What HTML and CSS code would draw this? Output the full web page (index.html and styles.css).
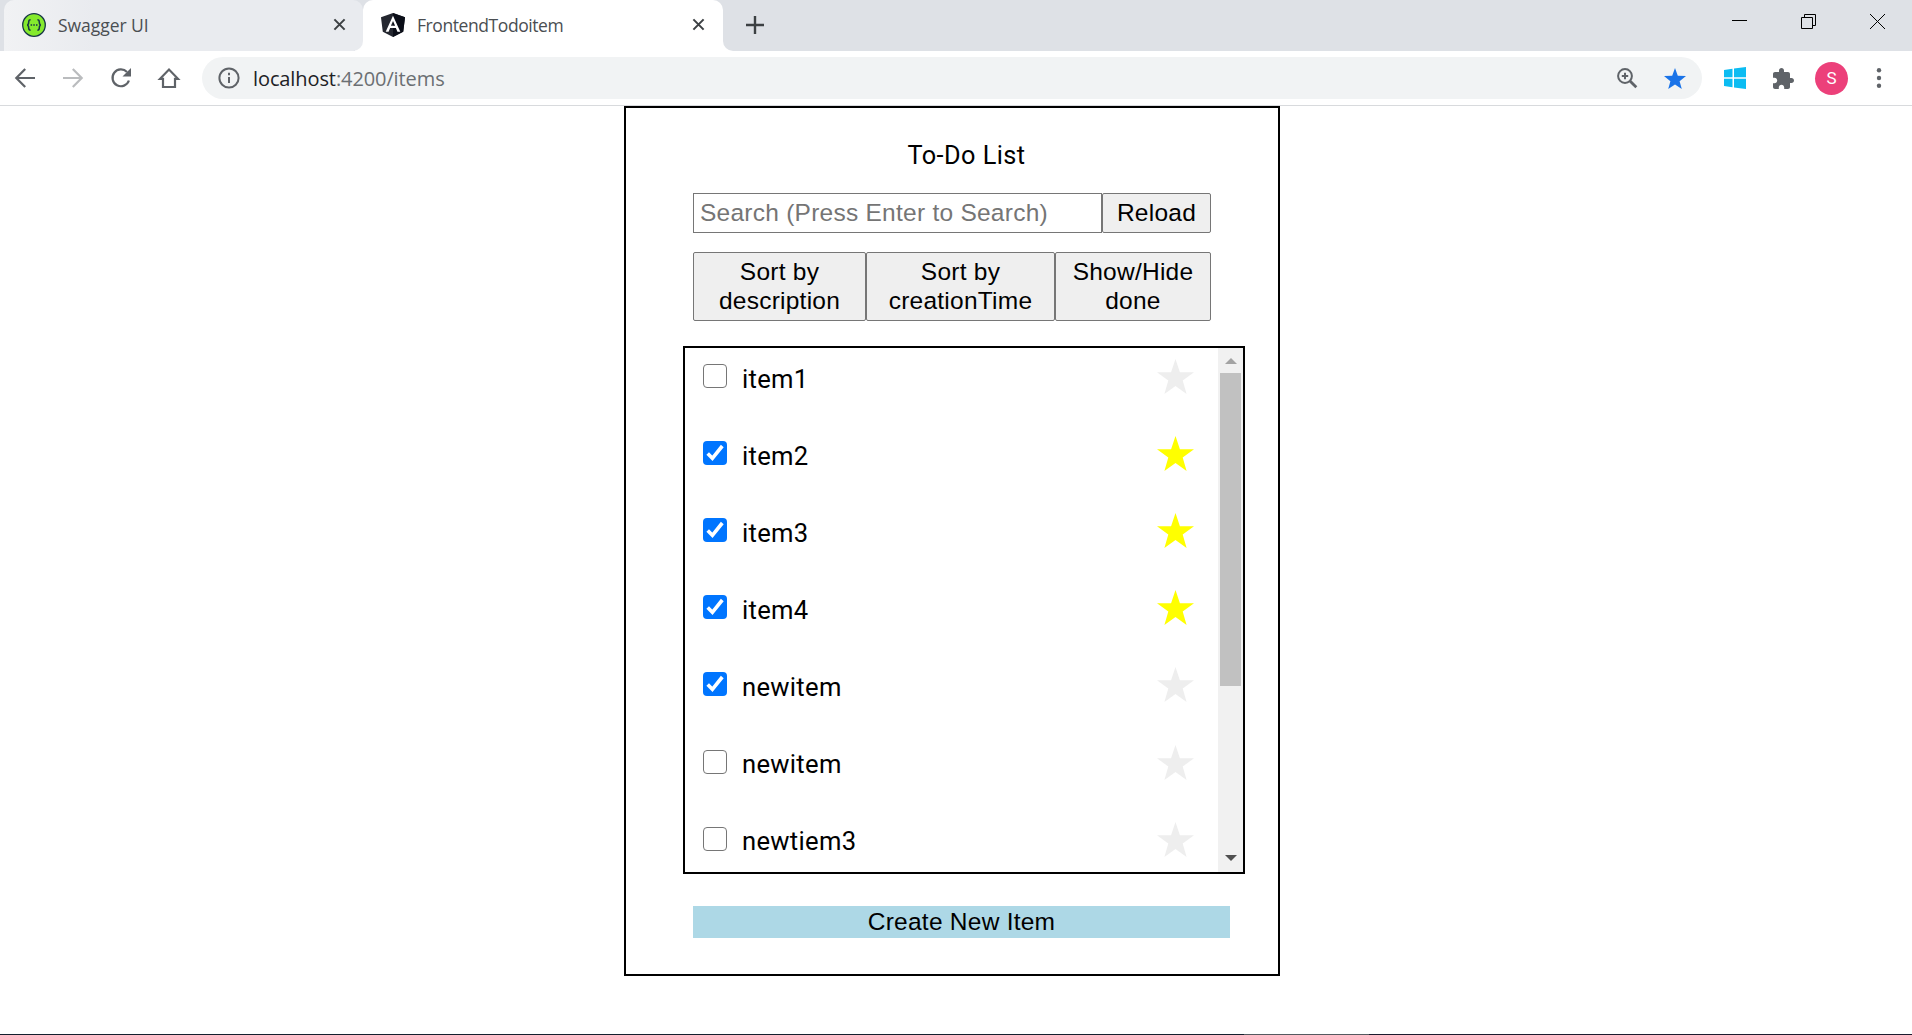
FILE: index.html
```html
<!DOCTYPE html>
<html lang="en">
<head>
<meta charset="utf-8">
<title>FrontendTodoitem</title>
<link rel="stylesheet" href="styles.css">
</head>
<body>
<header class="tabstrip">
  <div class="tab tab-idle">
    <svg class="favicon" viewBox="0 0 24 24"><circle cx="12" cy="12" r="11.3" fill="#85ea2d" stroke="#173647" stroke-width="1.3"/><path d="M8.6 6.8c-1.7 0-1.9.7-1.9 2.2 0 1.900-.2 2.700-1.500 3 1.300.3 1.500 1.100 1.500 3 0 1.500.2 2.200 1.900 2.200M15.400 6.800c1.700 0 1.900.7 1.900 2.200 0 1.900.2 2.700 1.500 3-1.300.3-1.500 1.100-1.500 3 0 1.500-.2 2.200-1.900 2.200" fill="none" stroke="#173647" stroke-width="1.500"/><path d="M8.600 12h1.500M11.300 12h1.500M14 12h1.500" stroke="#173647" stroke-width="1.400"/></svg>
    <span class="tab-title swagger">Swagger UI</span>
    <svg class="close" viewBox="0 0 14 14"><path d="M1.500 1.500l11 11M12.500 1.500l-11 11"/></svg>
  </div>
  <div class="tab tab-active">
    <svg class="favicon" viewBox="0 0 24 24"><path d="M12 0l12 4.200-1.800 14.500L12 24 1.800 18.700 0 4.200z" fill="#23262f"/><path d="M12 0l12 4.200-1.800 14.500L12 24z" fill="#0b0e18"/><path d="M12 2.800L4.700 18.800h2.900l1.500-3.700h5.800l1.500 3.700h2.900zm0 5.300l2.100 4.700H9.900z" fill="#fff" fill-rule="evenodd"/></svg>
    <span class="tab-title frontend">FrontendTodoitem</span>
    <svg class="close" viewBox="0 0 14 14"><path d="M1.500 1.500l11 11M12.500 1.500l-11 11"/></svg>
  </div>
  <svg class="newtab" viewBox="0 0 18 18"><path d="M9 0v18M0 9h18"/></svg>
  <div class="window-buttons">
    <svg viewBox="0 0 15 15"><path d="M0 6.500h15"/></svg>
    <svg viewBox="0 0 15 15"><path d="M.5 3.500h11v11H.5zM3.500 3.500v-3h11v11h-3"/></svg>
    <svg viewBox="0 0 15 15"><path d="M0 0l15 15M15 0L0 15"/></svg>
  </div>
</header>
<nav class="toolbar">
  <div class="nav-icons">
    <svg viewBox="0 0 20 20"><path d="M20 10H1.500M10.200 1L1.300 10l8.900 9"/></svg>
    <svg class="off" viewBox="0 0 20 20"><path d="M0 10h18.500M9.800 1l8.900 9-8.900 9"/></svg>
    <svg viewBox="0 0 20 20"><path d="M17.900 12.500A8.400 8.400 0 1 1 16 4"/><path d="M20 0v8.500h-8.500z" class="solid"/></svg>
    <svg viewBox="0 0 20 20"><path d="M1 10.800h3V19h12v-8.200h3L10 1.500z"/></svg>
  </div>
  <div class="omnibox">
    <svg class="info" viewBox="0 0 22 22"><circle cx="11" cy="11" r="9.600"/><path d="M11 10v6M11 5.800v2.500"/></svg>
    <span class="url">localhost<span class="path">:4200/items</span></span>
    <svg class="zoomicon" viewBox="0 0 20 20"><circle cx="8" cy="8" r="6.900"/><path d="M8 4.800v6.400M4.800 8h6.400"/><path d="M13 13l6.300 6.300" class="handle"/></svg>
    <svg class="bookmark" viewBox="0 0 22 21"><path d="M11 0l2.800 7.700 8.200.4-6.400 5.100L17.800 21 11 16.500 4.200 21l2.200-7.800L0 8.100l8.200-.4z"/></svg>
  </div>
  <div class="extensions">
    <svg class="windows" viewBox="0 0 22 22"><path d="M0 3l8.500-1.200v8.500H0zM10 1.500L22 0v10.300H10zM0 11.700h8.500v8.500L0 19zM10 11.700h12V22l-12-1.500z"/></svg>
    <svg class="puzzle" viewBox="2 1 21 21"><path d="M20.500 11H19V7c0-1.100-.9-2-2-2h-4V3.500C13 2.120 11.880 1 10.500 1S8 2.120 8 3.500V5H4c-1.100 0-1.990.9-1.990 2v3.800H3.500c1.490 0 2.700 1.210 2.700 2.700s-1.210 2.700-2.700 2.700H2V20c0 1.100.9 2 2 2h3.800v-1.500c0-1.490 1.210-2.700 2.700-2.700 1.490 0 2.700 1.210 2.700 2.700V22H17c1.100 0 2-.9 2-2v-4h1.500c1.380 0 2.500-1.120 2.500-2.500S21.880 11 20.500 11z"/></svg>
    <span class="avatar">S</span>
    <svg class="menu" viewBox="0 0 6 20"><circle cx="3" cy="2.300" r="2.200"/><circle cx="3" cy="10" r="2.200"/><circle cx="3" cy="17.700" r="2.200"/></svg>
  </div>
</nav>
<main class="card">
  <h1 class="title">To-Do List</h1>
  <div class="search-row">
    <input class="search" type="text" placeholder="Search (Press Enter to Search)">
    <button class="btn">Reload</button>
  </div>
  <div class="sort-row">
    <button class="btn">Sort by<br>description</button>
    <button class="btn">Sort by<br>creationTime</button>
    <button class="btn">Show/Hide<br>done</button>
  </div>
  <section class="list">
    <ul class="items">
      <li><span class="box"></span><span class="name">item1</span><svg class="star" viewBox="0 0 36 34"><path d="M18 0l4.300 12.800H36L25 20.900 28.800 34 18 26.200 7.200 34 11 20.900 0 12.800h13.700z"/></svg></li>
      <li><span class="box on"><svg viewBox="0 0 24 24"><path d="M4.700 12.500l4.700 4.800L19.300 5"/></svg></span><span class="name">item2</span><svg class="star lit" viewBox="0 0 36 34"><path d="M18 0l4.300 12.800H36L25 20.900 28.800 34 18 26.200 7.200 34 11 20.900 0 12.800h13.700z"/></svg></li>
      <li><span class="box on"><svg viewBox="0 0 24 24"><path d="M4.700 12.500l4.700 4.800L19.300 5"/></svg></span><span class="name">item3</span><svg class="star lit" viewBox="0 0 36 34"><path d="M18 0l4.300 12.800H36L25 20.900 28.800 34 18 26.200 7.200 34 11 20.900 0 12.800h13.700z"/></svg></li>
      <li><span class="box on"><svg viewBox="0 0 24 24"><path d="M4.700 12.500l4.700 4.800L19.300 5"/></svg></span><span class="name">item4</span><svg class="star lit" viewBox="0 0 36 34"><path d="M18 0l4.300 12.800H36L25 20.900 28.800 34 18 26.200 7.200 34 11 20.900 0 12.800h13.700z"/></svg></li>
      <li><span class="box on"><svg viewBox="0 0 24 24"><path d="M4.700 12.500l4.700 4.800L19.300 5"/></svg></span><span class="name">newitem</span><svg class="star" viewBox="0 0 36 34"><path d="M18 0l4.300 12.800H36L25 20.900 28.800 34 18 26.200 7.200 34 11 20.900 0 12.800h13.700z"/></svg></li>
      <li><span class="box"></span><span class="name">newitem</span><svg class="star" viewBox="0 0 36 34"><path d="M18 0l4.300 12.800H36L25 20.900 28.800 34 18 26.200 7.200 34 11 20.900 0 12.800h13.700z"/></svg></li>
      <li><span class="box"></span><span class="name">newtiem3</span><svg class="star" viewBox="0 0 36 34"><path d="M18 0l4.300 12.800H36L25 20.900 28.800 34 18 26.200 7.200 34 11 20.900 0 12.800h13.700z"/></svg></li>
    </ul>
    <div class="scrollbar">
      <svg class="arrow up" viewBox="0 0 12 6"><path d="M0 6l6-6 6 6z"/></svg>
      <div class="thumb"></div>
      <svg class="arrow down" viewBox="0 0 12 6"><path d="M0 0h12L6 6z"/></svg>
    </div>
  </section>
  <button class="create">Create New Item</button>
</main>
<footer class="taskbar-edge"></footer>
</body>
</html>
```
FILE: styles.css
```css
* { box-sizing: border-box; }
body {
  margin: 0;
  height: 1035px;
  display: flex;
  flex-direction: column;
  overflow: hidden;
  background: #fff;
  color: #000;
}
svg { display: block; flex: none; fill: none; overflow: visible; }

/* Tab strip */
.tabstrip {
  height: 51px;
  flex: none;
  display: flex;
  padding-left: 4px;
  background: linear-gradient(#fff, #fff) 355px 100% / 380px 10px no-repeat #dee1e6;
}
.tab {
  height: 51px;
  display: flex;
  align-items: center;
  padding: 0 18px 2px 18px;
  font-family: "Open Sans", "Noto Sans", sans-serif;
  font-size: 17.500px;
  line-height: 24px;
  color: #4a4e52;
}
.tab-idle { width: 359px; border-radius: 10px 10px 10px 0; background: linear-gradient(90deg, #f1f2f4, #e9ebef 25%); }
.tab-idle { padding-right: 17px; border-bottom-right-radius: 10px; }
.tab-active { width: 360px; border-radius: 10px 10px 0 0; background: #fff; }
.favicon { width: 24px; height: 24px; }
.tab-title { margin: 0 0 0 12px; flex: 1; white-space: nowrap; }
.swagger { letter-spacing: -0.050px; }
.frontend { letter-spacing: -0.420px; }
.close { width: 13px; height: 13px; stroke: #3c4043; stroke-width: 2.200; }
.newtab {
  width: 42px;
  height: 51px;
  padding: 16px 1px 17px 23px;
  border-bottom-left-radius: 10px;
  background: #dee1e6;
  stroke: #3c4043;
  stroke-width: 2.400;
}
.window-buttons {
  flex: 1;
  display: flex;
  justify-content: flex-end;
  gap: 54px;
  padding: 14px 27px 0 0;
  background: #dee1e6;
  stroke: #000;
  stroke-width: 1;
}
.window-buttons svg { width: 15px; height: 15px; }

/* Toolbar */
.toolbar {
  height: 55px;
  flex: none;
  display: flex;
  align-items: center;
  padding-left: 15px;
  border-bottom: 1px solid #d8dadd;
}
.nav-icons { width: 187px; display: flex; gap: 28px; stroke: #5f6368; stroke-width: 2.200; }
.nav-icons svg { width: 20px; height: 20px; }
.nav-icons .off { stroke: #babcbe; }
.nav-icons .solid { fill: #5f6368; stroke: none; }
.omnibox {
  width: 1500px;
  height: 42px;
  display: flex;
  align-items: center;
  padding: 0 16px;
  border-radius: 21px;
  background: #f1f3f4;
}
.info { width: 22px; height: 22px; stroke: #5f6368; stroke-width: 2; }
.url {
  flex: 1;
  margin-left: 13px;
  font-family: "Open Sans", "Noto Sans", sans-serif;
  font-size: 20px;
  letter-spacing: -0.1px;
  color: #202124;
}
.path { color: #6b6f73; }
.zoomicon { width: 20px; height: 20px; margin-right: 27px; stroke: #5f6368; stroke-width: 2; }
.handle { stroke-width: 2.800; }
.bookmark { width: 22px; height: 21px; fill: #1a73e8; }
.extensions { flex: 1; display: flex; align-items: center; padding-left: 22px; }
.windows { width: 22px; height: 22px; fill: #0bbcf2; }
.puzzle { width: 21px; height: 21px; margin-left: 27px; fill: #5f6368; }
.avatar {
  width: 33px;
  height: 33px;
  margin-left: 21px;
  border-radius: 50%;
  background: #ec407a;
  color: #fff;
  font: 17px/33px Roboto, sans-serif;
  text-align: center;
}
.menu { width: 6px; height: 20px; margin-left: 28px; fill: #5f6368; }

/* To-do card */
.card {
  width: 656px;
  height: 870px;
  flex: none;
  margin-left: 624px;
  padding: 0 33px 0 57px;
  display: flex;
  flex-direction: column;
  align-items: flex-start;
  border: 2px solid #000;
}
.title {
  width: 547px;
  margin: 32px 0 0 10px;
  font: 400 25.300px/32px Roboto, sans-serif;
  letter-spacing: 0.450px;
  text-align: center;
}
.search-row, .sort-row { width: 518px; margin-left: 10px; display: grid; }
.search-row { height: 40px; margin-top: 21px; grid-template-columns: 409px 109px; }
.sort-row { height: 69px; margin-top: 19px; grid-template-columns: 173px 189px 156px; }
.search, .btn, .create {
  font: 24.500px/29px "Liberation Sans", Arial, sans-serif;
  letter-spacing: 0.250px;
  border: 1px solid #767676;
  color: #000;
}
.search { min-width: 0; padding: 0 6px 2px; background: #fff; }
.search::placeholder { color: #757575; }
.btn { padding: 0 0 2px; border-radius: 2px; background: #efefef; }

.list {
  width: 562px;
  height: 528px;
  margin: 25px 0 0;
  display: flex;
  border: 2px solid #000;
}
.items {
  flex: 1;
  height: 524px;
  margin: 0;
  padding: 0;
  list-style: none;
  overflow: hidden;
}
.items li {
  height: 77.120px;
  display: flex;
  align-items: flex-start;
  padding: 11px 24px 0 18px;
}
.box { width: 24px; height: 24px; margin-top: 5px; border: 1px solid #767676; border-radius: 4px; }
.box.on { border: 0; background: #0075ff; }
.box svg { width: 24px; height: 24px; stroke: #fff; stroke-width: 3.600; }
.name { flex: 1; margin: 0.700px 0 0 15px; font: 25.600px/38px Roboto, sans-serif; letter-spacing: 0.300px; }
.star { width: 37px; height: 35px; fill: #eee; }
.star.lit { fill: #ff0; }
.scrollbar {
  width: 25px;
  display: flex;
  flex-direction: column;
  align-items: flex-start;
  padding-left: 2px;
  background: #f1f1f1;
}
.arrow { width: 12px; height: 6px; }
.up { margin: 10px 0 9px 5px; fill: #a3a3a3; }
.down { margin: auto 0 11px 5px; fill: #505050; }
.thumb { width: 21px; height: 313px; background: #c1c1c1; }
.create {
  width: 537px;
  height: 32px;
  margin: 32px 0 0 10px;
  padding: 0 0 2px;
  border: 0;
  background: #add8e6;
}
.taskbar-edge {
  height: 1px;
  margin-top: auto;
  flex: none;
  background: linear-gradient(90deg, #14202e 1244px, #555a60 1244px 1369px, #1b1b2e 1369px);
}
```
